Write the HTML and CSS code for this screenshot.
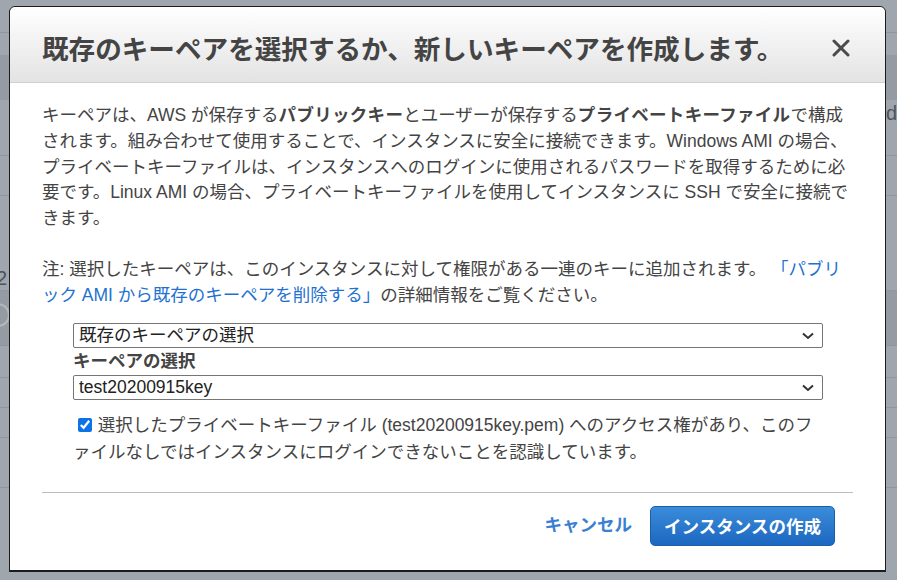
FILE: index.html
```html
<!DOCTYPE html>
<html lang="ja">
<head>
  <meta charset="UTF-8" />
  <meta name="viewport" content="width=device-width, initial-scale=1.0"/>
  <title>キーペアの選択</title>
  <link rel="stylesheet" href="styles.css">
</head>
<body>
  <div class="page-behind">
    <div class="bg-row bg-top"></div>
    <div class="bg-gap"></div>
    <div class="bg-row bg-band"><span class="bg-dash"></span></div>
    <div class="bg-row bg-r1"><span class="bg-text right">d</span></div>
    <div class="bg-row bg-r2"></div>
    <div class="bg-row bg-r3"><span class="bg-text left bottom">2</span></div>
    <div class="bg-row bg-band bg-band2"><span class="bg-info">i</span></div>
    <div class="bg-row bg-r4"></div>
    <div class="bg-row bg-r5"></div>
    <div class="bg-row bg-r5"></div>
    <div class="bg-row bg-r6"></div>
  </div>

  <div class="modal">
    <div class="modal-header">
      <h2>既存のキーペアを選択するか、新しいキーペアを作成します。</h2>
      <button class="close-btn" type="button" aria-label="閉じる">
        <svg width="18" height="18" viewBox="0 0 18 18">
          <path d="M2 2 L16 16 M16 2 L2 16" stroke="#4a4a4a" stroke-width="3" stroke-linecap="round"/>
        </svg>
      </button>
    </div>

    <div class="modal-body">
      <p>キーペアは、AWS が保存する<b>パブリックキー</b>とユーザーが保存する<b>プライベートキーファイル</b>で構成されます。組み合わせて使用することで、インスタンスに安全に接続できます。Windows AMI の場合、プライベートキーファイルは、インスタンスへのログインに使用されるパスワードを取得するために必要です。Linux AMI の場合、プライベートキーファイルを使用してインスタンスに SSH で安全に接続できます。</p>

      <p class="note">注: 選択したキーペアは、このインスタンスに対して権限がある一連のキーに追加されます。 <a href="#">「パブリック AMI から既存のキーペアを削除する」</a>の詳細情報をご覧ください。</p>

      <div class="key-form">
        <div class="select-wrap">
          <select class="key-select">
            <option>既存のキーペアの選択</option>
            <option>新しいキーペアの作成</option>
          </select>
          <svg class="chevron" width="12" height="8" viewBox="0 0 12 8">
            <path d="M1 1.5 L6 6 L11 1.5" fill="none" stroke="#333" stroke-width="2"/>
          </svg>
        </div>
        <label class="key-label" for="key-name">キーペアの選択</label>
        <div class="select-wrap">
          <select class="key-select" id="key-name">
            <option>test20200915key</option>
          </select>
          <svg class="chevron" width="12" height="8" viewBox="0 0 12 8">
            <path d="M1 1.5 L6 6 L11 1.5" fill="none" stroke="#333" stroke-width="2"/>
          </svg>
        </div>
        <label class="ack">
          <input type="checkbox" checked />
          選択したプライベートキーファイル (test20200915key.pem) へのアクセス権があり、このファイルなしではインスタンスにログインできないことを認識しています。
        </label>
      </div>

      <div class="modal-footer">
        <a href="#" class="cancel-link">キャンセル</a>
        <button type="button" class="launch-btn">インスタンスの作成</button>
      </div>
    </div>
  </div>
</body>
</html>
```

FILE: styles.css
```css
body {
  margin: 0;
  font-family: "Liberation Sans", Arial, "Noto Sans CJK JP", sans-serif;
  background-color: #a0a6ad;
  height: 580px;
  overflow: hidden;
  position: relative;
  text-spacing-trim: space-all;
}

/* console page dimmed behind the dialog */
.page-behind {
  display: flex;
  flex-direction: column;
}

.bg-row {
  position: relative;
  border-bottom: 1px solid #90969d;
  box-sizing: border-box;
}

.bg-top { height: 33px; }
.bg-gap { height: 22px; }

.bg-band {
  height: 45px;
  background-color: #959ba2;
  border-bottom: none;
}

.bg-r1 { height: 56px; }
.bg-r2 { height: 40px; }
.bg-r3 { height: 95px; }
.bg-band2 { height: 55px; border-bottom: 1px solid #90969d; }
.bg-r4 { height: 32px; }
.bg-r5 { height: 30px; }
.bg-r6 { height: 50px; }

.bg-text {
  position: absolute;
  font-size: 20px;
  color: #4d545c;
}

.bg-text.right { right: 0; top: 2px; }
.bg-text.left { left: -4px; bottom: 0; }

.bg-dash {
  position: absolute;
  right: 22px;
  top: 20px;
  width: 10px;
  height: 2px;
  background: #444a52;
}

.bg-info {
  position: absolute;
  left: -14px;
  top: 12px;
  width: 20px;
  height: 20px;
  border: 2px solid #b4b9be;
  border-radius: 50%;
  color: #b4b9be;
  font-size: 14px;
  text-align: center;
  line-height: 20px;
}

/* dialog */
.modal {
  position: absolute;
  left: 9px;
  top: 6px;
  width: 877px;
  height: 565px;
  box-sizing: border-box;
  background-color: white;
  border: 1px solid #1b1b1b;
  box-shadow: 0 1px 0 #1b1b1b;
  border-radius: 6px 6px 0 0;
  color: #444;
}

.modal-header {
  height: 75px;
  display: flex;
  align-items: center;
  justify-content: space-between;
  padding: 0 32px;
  background: linear-gradient(#ffffff, #e3e3e3);
  border-bottom: 1px solid #cfcfcf;
  border-radius: 6px 6px 0 0;
}

.modal-header h2 {
  margin: 0;
  font-size: 26.6px;
  font-weight: bold;
  color: #444;
  padding-top: 6px;
}

.close-btn {
  background: none;
  border: none;
  padding: 0;
  margin-right: 3px;
  margin-top: 10px;
  cursor: pointer;
}

.modal-body {
  padding: 20px 32px 0;
  font-size: 17.5px;
  line-height: 25.8px;
}

.modal-body p {
  margin: 0 -2px 25px 0;
}

.modal-body p b {
  letter-spacing: 0.3px;
}

.modal-body p.note {
  margin-bottom: 14px;
}

.note a {
  color: #1f72d0;
  text-decoration: none;
}

.key-form {
  margin: 0 30px 0 31px;
  display: flex;
  flex-direction: column;
}

.select-wrap {
  position: relative;
  display: flex;
}

.key-select {
  flex: 1;
  height: 25px;
  font-family: inherit;
  font-size: 17.5px;
  color: #222;
  border: 1px solid #767676;
  border-radius: 2px;
  background-color: white;
  padding: 0 30px 0 5px;
  appearance: none;
  -webkit-appearance: none;
}

.chevron {
  position: absolute;
  right: 9px;
  top: 9px;
  pointer-events: none;
}

.key-label {
  font-weight: bold;
  line-height: 27px;
  color: #444;
}

.ack {
  margin-top: 12px;
  padding-right: 4px;
  font-size: 17.5px;
  line-height: 27px;
}

.ack input {
  width: 14px;
  height: 14px;
  margin: 0 1px 0 5px;
  vertical-align: -1px;
  accent-color: #0b72e8;
}

.modal-footer {
  margin-top: 26px;
  border-top: 1px solid #bdbdbd;
  padding: 13px 18px 0 0;
  display: flex;
  justify-content: flex-end;
  align-items: center;
  gap: 18px;
}

.cancel-link {
  color: #3a80d2;
  font-weight: bold;
  font-size: 17.5px;
  text-decoration: none;
}

.launch-btn {
  width: 185px;
  height: 40px;
  font-family: inherit;
  font-size: 17.5px;
  font-weight: bold;
  color: white;
  background: linear-gradient(#3b8cdb, #1c67c0);
  border: 1px solid #1a5eae;
  border-radius: 5px;
  cursor: pointer;
}
```
